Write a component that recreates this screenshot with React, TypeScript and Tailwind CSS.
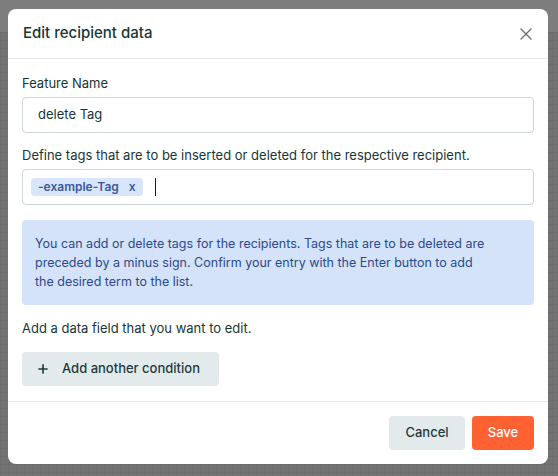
import { X, Plus } from "lucide-react";

export default function App() {
  return (
    <div
      className="relative h-[476px] w-[558px] overflow-hidden bg-[#727272] bg-[linear-gradient(#6d6d6d_1px,transparent_1px),linear-gradient(90deg,#6d6d6d_1px,transparent_1px)] bg-[size:8px_8px]"
      style={{ fontFamily: "Inter, 'Noto Sans', sans-serif" }}
    >
      <div className="h-[32px] bg-[#7d7d7d]" />
      <div className="absolute left-[8px] top-[9px] flex h-[455px] w-[540px] flex-col rounded-lg bg-white text-[#173636]">
        <div className="flex h-[50px] items-center justify-between border-b border-[#e6ecec] pl-[15px] pr-[12px]">
          <h2 className="text-[15px] font-medium">Edit recipient data</h2>
          <X className="h-[20px] w-[20px] text-[#6b6b6b]" strokeWidth={1.5} />
        </div>

        <div className="flex flex-1 flex-col px-[14px] pt-[15px]">
          <label className="text-[13px] leading-[18px]">Feature Name</label>
          <div className="mt-[5px] flex h-[36px] items-center rounded border border-[#cfd6d6] px-[15px] text-[13px]">
            delete Tag
          </div>

          <label className="mt-[13px] text-[13px] leading-[18px]">
            Define tags that are to be inserted or deleted for the respective recipient.
          </label>
          <div className="mt-[5px] flex h-[36px] items-center gap-[12px] rounded border border-[#cfd6d6] px-[8px]">
            <span className="flex h-[18px] items-center gap-[10px] rounded-sm bg-[#d8e5fa] px-[7px] text-[12px] font-semibold text-[#3a5a9e]">
              -example-Tag <span>x</span>
            </span>
            <span className="h-[18px] w-px bg-[#1a1a1a]" />
          </div>

          <div className="mt-[15px] rounded bg-[#d4e3f9] py-[14px] pl-[13px] pr-[40px] text-[12.5px] leading-[19px] text-[#2d4a8a]">
            You can add or delete tags for the recipients. Tags that are to be deleted are preceded by a minus sign. Confirm your entry with the Enter button to add the desired term to the list.
          </div>

          <p className="mt-[14px] text-[13px] leading-[18px]">Add a data field that you want to edit.</p>

          <button className="mt-[15px] flex h-[34px] w-[197px] items-center gap-[12px] rounded bg-[#e3eaeb] px-[14px] text-[13px] font-medium text-[#1d3a3c]">
            <Plus className="h-[14px] w-[14px]" strokeWidth={2.75} />
            Add another condition
          </button>
        </div>

        <div className="flex h-[63px] items-center justify-end gap-[7px] border-t border-[#e6ecec] px-[14px]">
          <button className="h-[34px] w-[76px] rounded bg-[#e3eaeb] text-[13px] font-medium text-[#1d3a3c]">
            Cancel
          </button>
          <button className="h-[34px] w-[62px] rounded bg-[#ff6133] text-[13px] font-medium text-white">
            Save
          </button>
        </div>
      </div>
    </div>
  );
}
